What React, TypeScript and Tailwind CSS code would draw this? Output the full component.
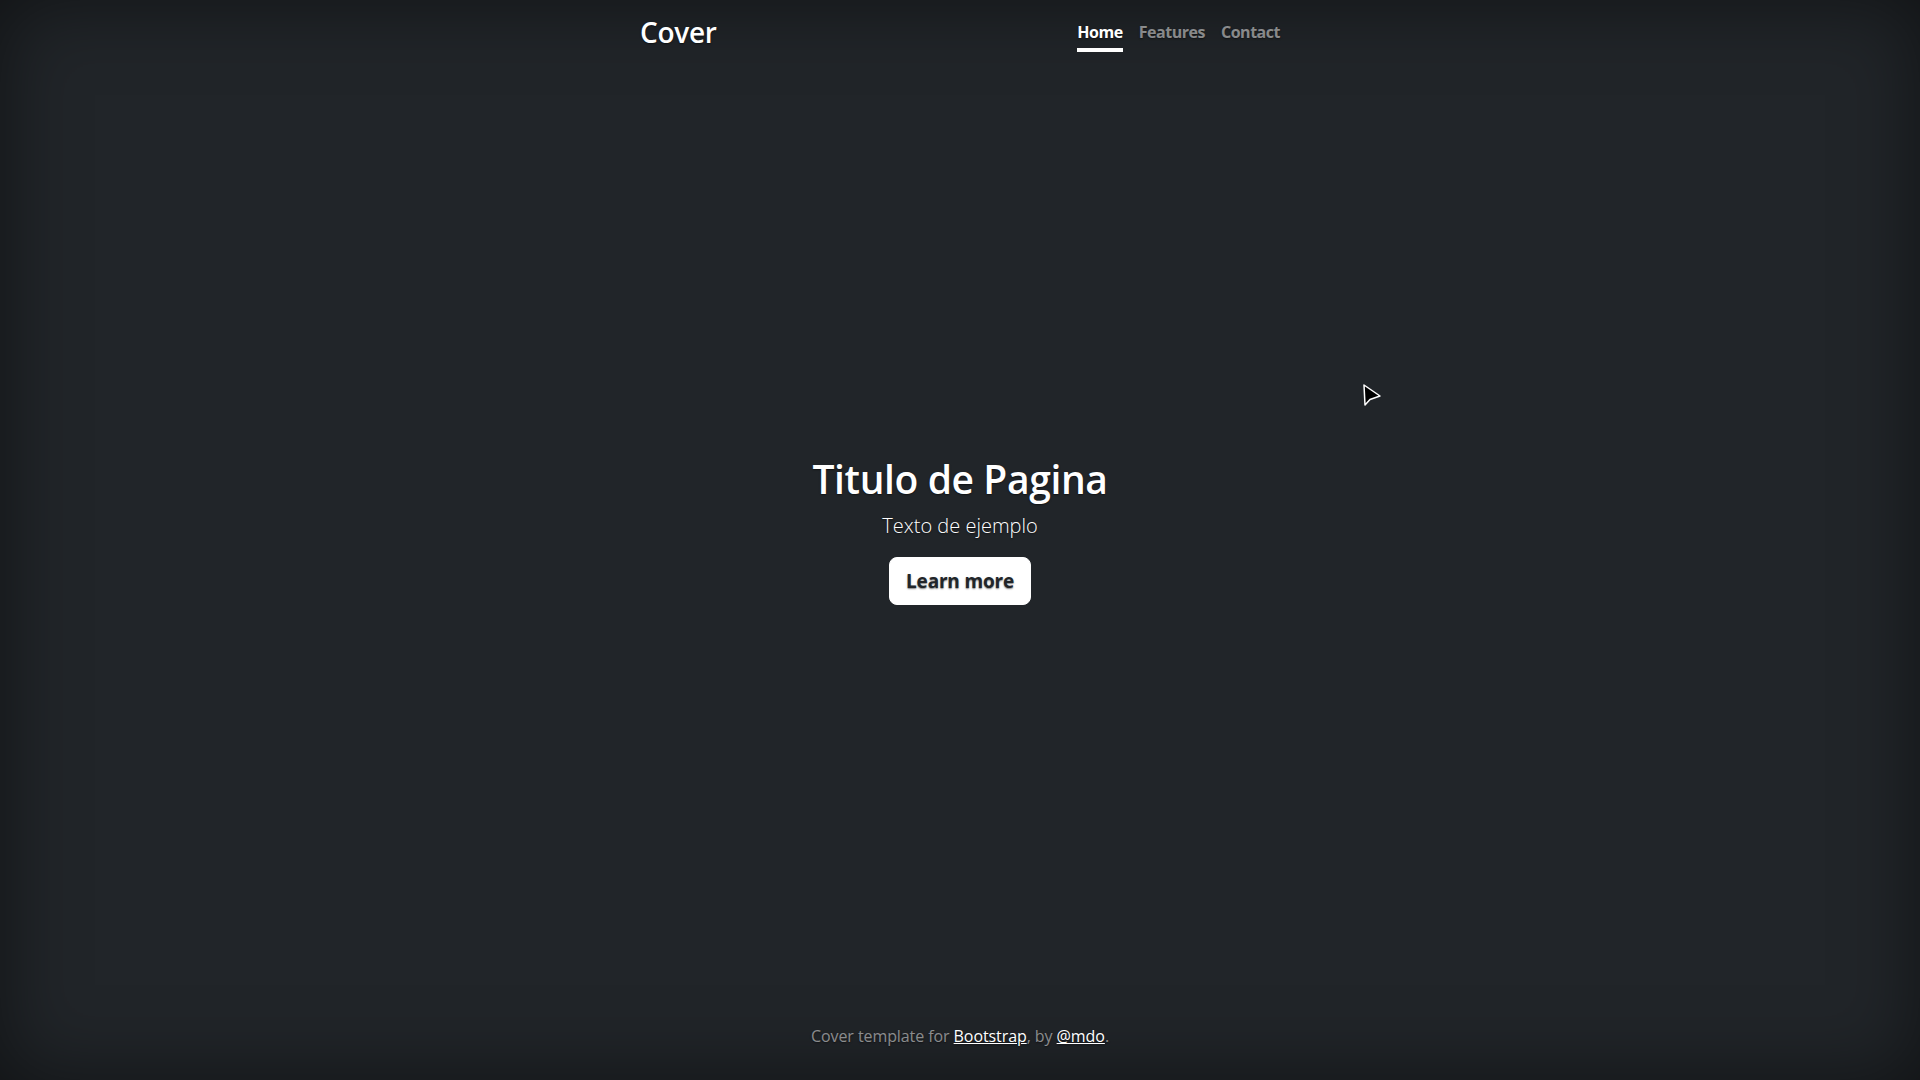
export default function App() {
  return (
    <div className="relative flex h-screen w-full bg-[#212529] text-white shadow-[inset_0_0_5rem_rgba(0,0,0,0.5)] [text-shadow:0_0.05rem_0.1rem_rgba(0,0,0,0.5)] font-['Open_Sans',sans-serif]">
      <div className="mx-auto flex h-full w-full max-w-[672px] flex-col p-4">
        {/* Header */}
        <header className="flex items-start justify-between">
          <h3 className="text-[28px] font-semibold leading-[1.2] tracking-[-0.01em]">Cover</h3>
          <nav className="flex gap-4">
            <a className="border-b-4 border-white py-1 text-base font-bold leading-6 tracking-[-0.03em] text-white">
              Home
            </a>
            <a className="border-b-4 border-transparent py-1 text-base font-bold leading-6 tracking-[-0.03em] text-white/50">
              Features
            </a>
            <a className="border-b-4 border-transparent py-1 text-base font-bold leading-6 tracking-[-0.03em] text-white/50">
              Contact
            </a>
          </nav>
        </header>

        {/* Main */}
        <main className="my-auto px-4 text-center">
          <h1 className="mb-2 text-[39px] font-semibold leading-[48px] tracking-[-0.01em]">Titulo de Pagina</h1>
          <p className="mb-4 text-xl font-light leading-[1.5]">Texto de ejemplo</p>
          <p className="mb-4 text-xl font-light leading-[1.5]">
            <a className="inline-block rounded-lg border border-white bg-white px-4 py-2 text-[19px] font-bold leading-[30px] tracking-[-0.01em] text-[#212529]">
              Learn more
            </a>
          </p>
        </main>

        {/* Footer */}
        <footer className="text-center text-white/50">
          <p className="mb-4 text-base leading-6 tracking-[-0.005em]">
            Cover template for{" "}
            <a className="text-white underline">Bootstrap</a>, by{" "}
            <a className="text-white underline">@mdo</a>.
          </p>
        </footer>
      </div>

      {/* mouse pointer */}
      <svg
        className="absolute left-[1362px] top-[383px]"
        width="22"
        height="26"
        viewBox="0 0 22 26"
      >
        <path
          d="M2 2 L3 22 L8 16.5 L18 13 Z"
          fill="#000"
          stroke="#fff"
          strokeWidth="1.5"
          strokeLinejoin="round"
        />
      </svg>
    </div>
  );
}
